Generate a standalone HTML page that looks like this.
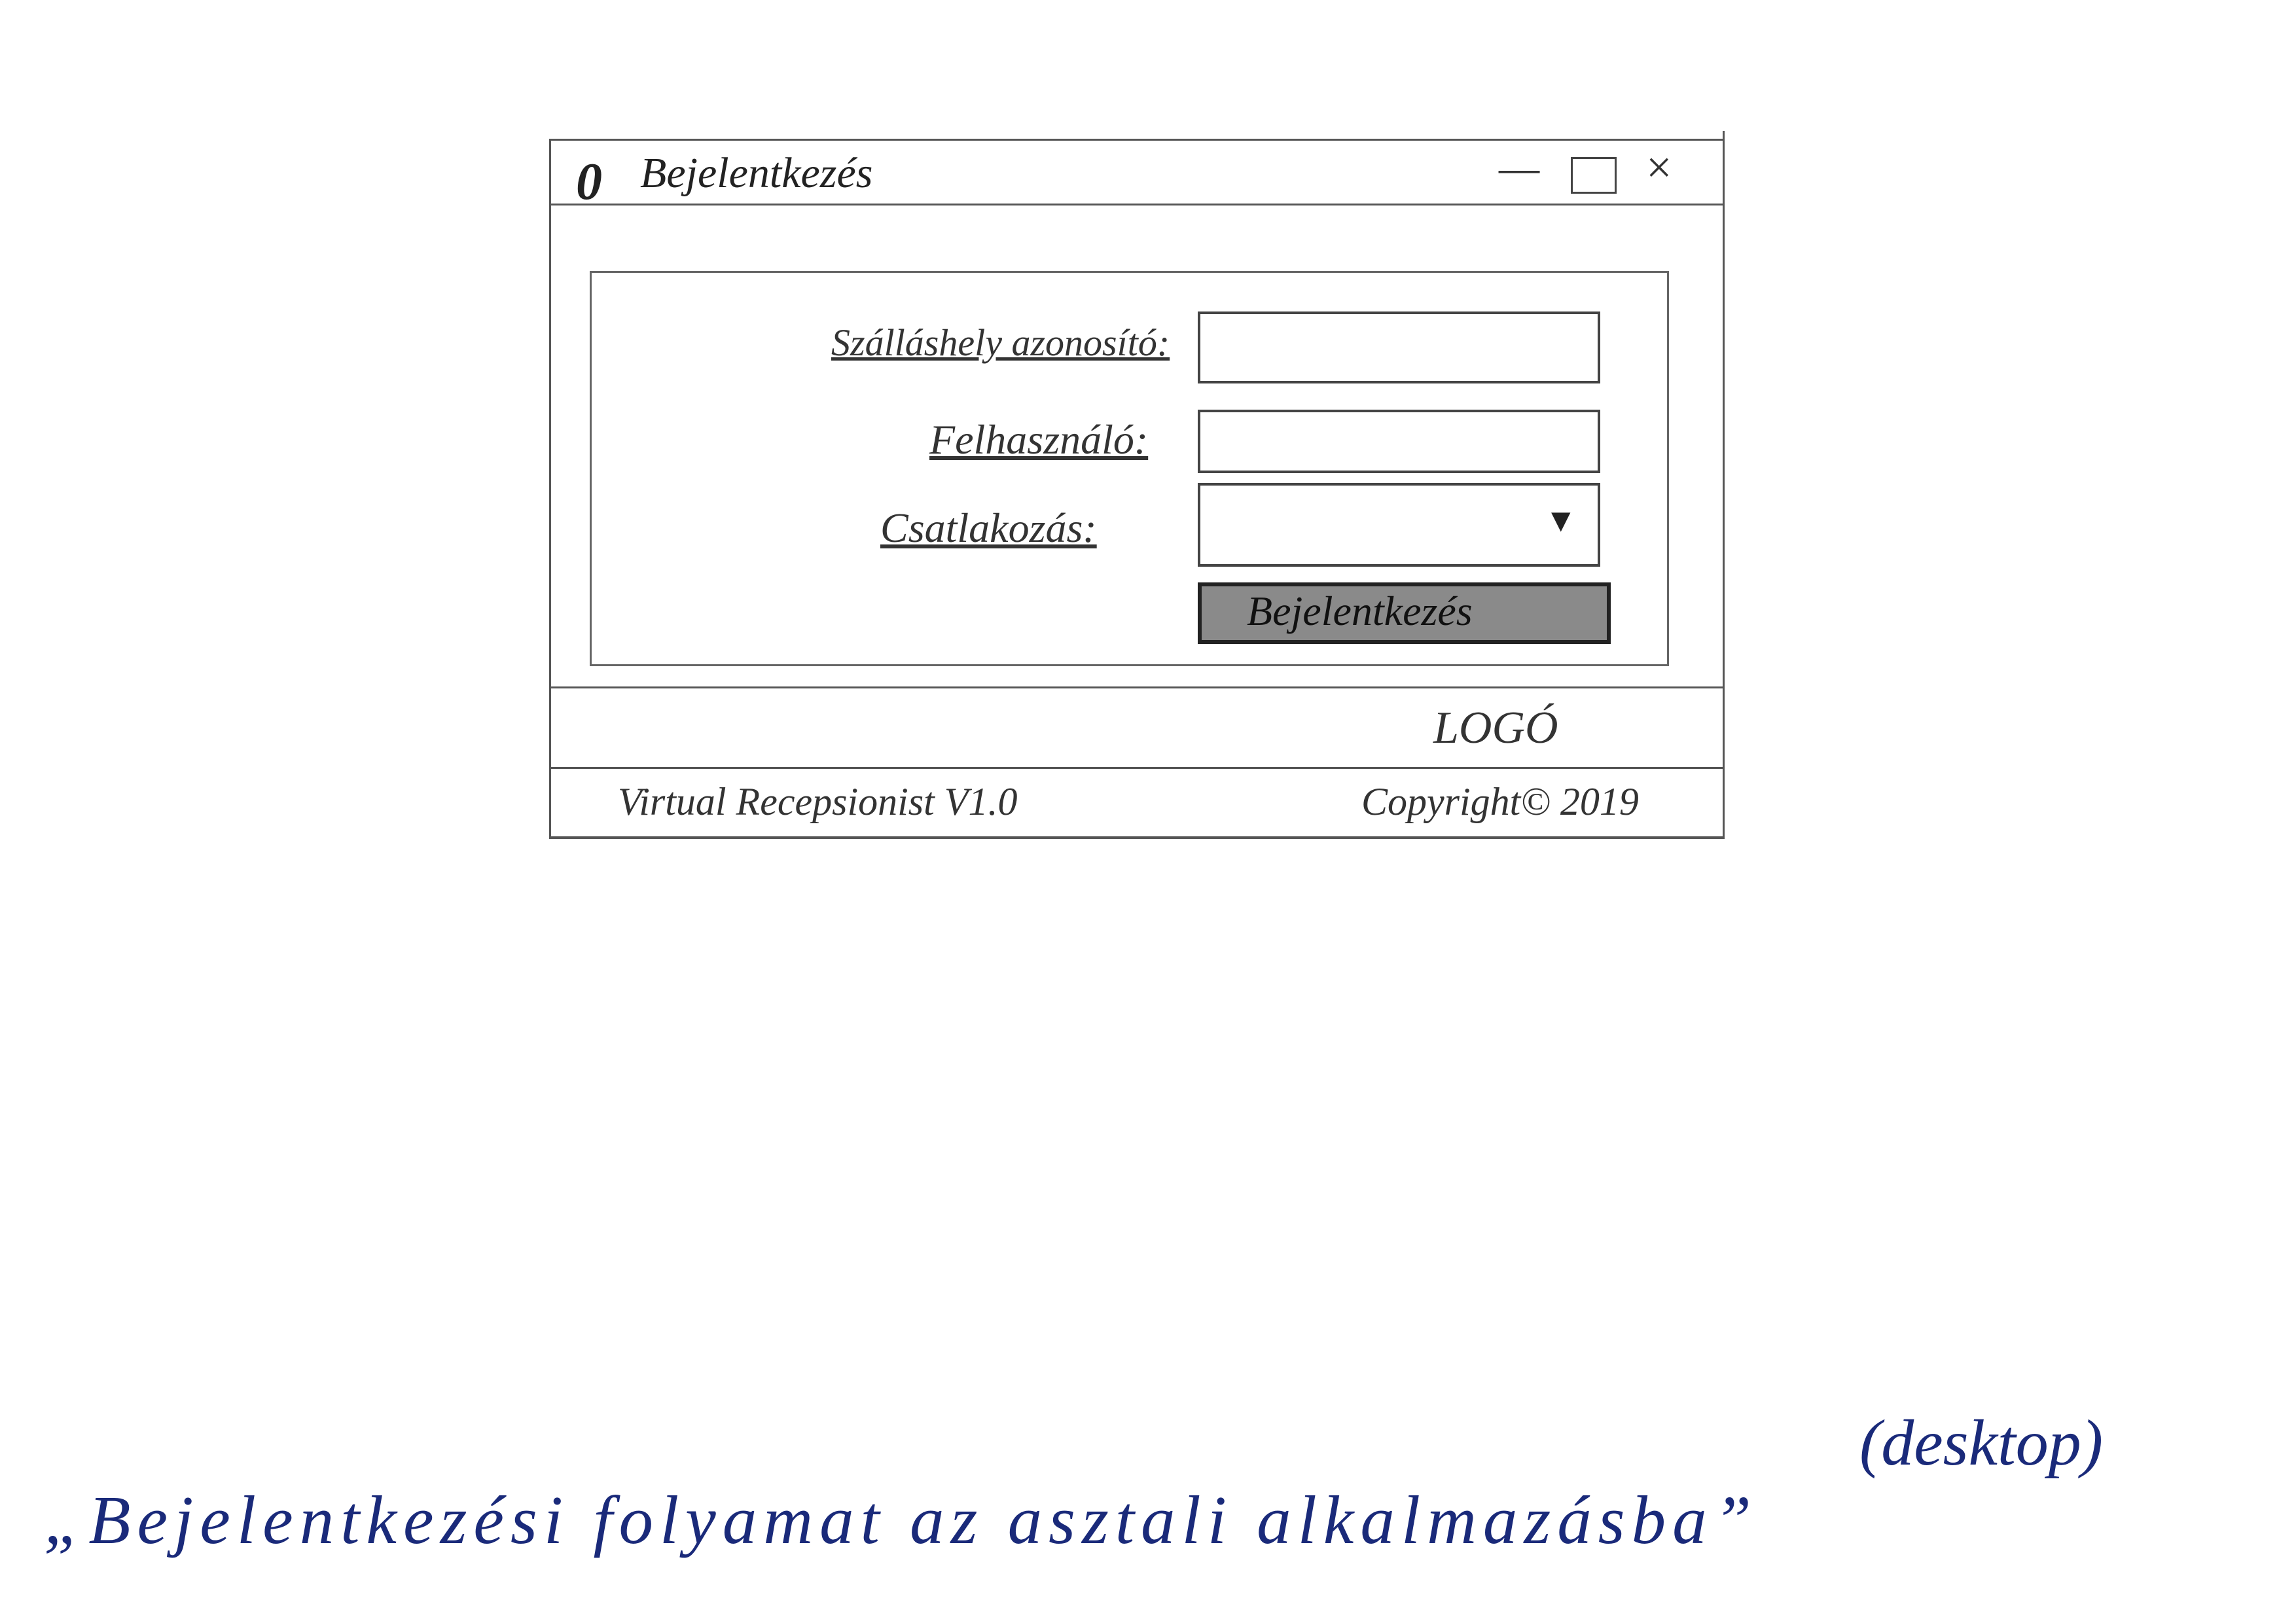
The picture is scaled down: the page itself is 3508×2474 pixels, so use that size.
<!DOCTYPE html>
<html><head><meta charset="utf-8"><style>
body{margin:0;width:3508px;height:2474px;background:#fff;position:relative;overflow:hidden;font-family:"Liberation Serif",serif;font-style:italic;color:#333}
.l{position:absolute;background:#555}
.t{position:absolute;white-space:nowrap;line-height:1}
.box{position:absolute;border:4px solid #444;box-sizing:border-box}
</style></head><body>
<div class="l" style="left:839px;top:212px;width:1796px;height:3px"></div>
<div class="l" style="left:839px;top:212px;width:3px;height:1068px"></div>
<div class="l" style="left:2632px;top:200px;width:3px;height:1082px"></div>
<div class="l" style="left:839px;top:311px;width:1796px;height:3px"></div>
<div class="l" style="left:839px;top:1049px;width:1796px;height:3px"></div>
<div class="l" style="left:839px;top:1172px;width:1796px;height:3px"></div>
<div class="l" style="left:839px;top:1278px;width:1796px;height:4px"></div>
<div class="t" style="left:880px;top:238px;font-size:80px;font-weight:bold;color:#222">0</div>
<div class="t" style="left:978px;top:232px;font-size:66px;color:#222">Bejelentkezés</div>
<div class="t" style="left:2290px;top:222px;font-size:70px;color:#333">—</div>
<div class="box" style="left:2400px;top:240px;width:70px;height:56px;border-width:3px"></div>
<div class="t" style="left:2515px;top:222px;font-size:70px;color:#333;font-style:normal">×</div>
<div class="box" style="left:901px;top:414px;width:1649px;height:604px;border-width:3px;border-color:#666"></div>
<div class="t" style="left:1270px;top:495px;font-size:58px;text-decoration:underline">Szálláshely azonosító:</div>
<div class="box" style="left:1830px;top:476px;width:615px;height:110px"></div>
<div class="t" style="left:1420px;top:640px;font-size:64px;text-decoration:underline">Felhasználó:</div>
<div class="box" style="left:1830px;top:626px;width:615px;height:97px"></div>
<div class="t" style="left:1345px;top:775px;font-size:64px;text-decoration:underline">Csatlakozás:</div>
<div class="box" style="left:1830px;top:738px;width:615px;height:128px"></div>
<div class="t" style="left:2360px;top:770px;font-size:50px;color:#222;font-style:normal">▼</div>
<div class="box" style="left:1830px;top:890px;width:631px;height:94px;background:#8a8a8a;border-color:#222;border-width:6px"></div>
<div class="t" style="left:1905px;top:902px;font-size:64px;color:#111">Bejelentkezés</div>
<div class="t" style="left:2190px;top:1078px;font-size:70px">LOGÓ</div>
<div class="t" style="left:944px;top:1195px;font-size:60px">Virtual Recepsionist V1.0</div>
<div class="t" style="left:2080px;top:1195px;font-size:60px">Copyright© 2019</div>
<div class="t" style="left:67px;top:2270px;font-size:105px;color:#1a2a7a;letter-spacing:10px">„Bejelentkezési folyamat az asztali alkalmazásba”</div>
<div class="t" style="left:2841px;top:2155px;font-size:100px;color:#1a2a7a">(desktop)</div>
</body></html>
